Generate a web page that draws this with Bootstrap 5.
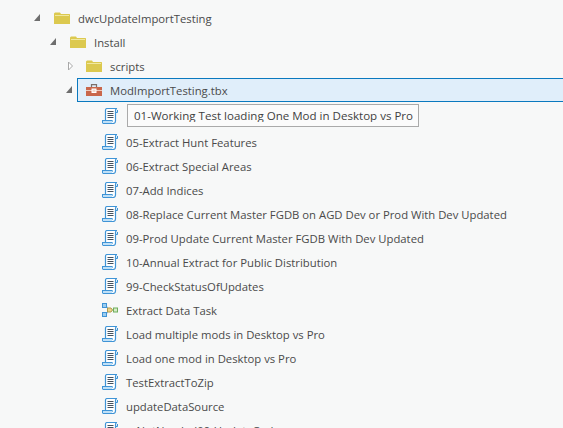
<!doctype html>
<html lang="en"><head><meta charset="utf-8">
<link href="https://cdn.jsdelivr.net/npm/bootstrap@5.3.0/dist/css/bootstrap.min.css" rel="stylesheet">
<style>
html,body{height:100%;overflow:hidden}
body{background:#f7f8f8;color:#4a4a4a;font-family:"Open Sans","Noto Sans",sans-serif;font-size:11.3px;width:563px;height:428px}
.tree{padding:6px 0 0;margin:0;list-style:none}
.trow{height:24px;line-height:24px;white-space:nowrap}
.trow>span:not(.tip),.selb>span{padding-top:2px}
.lv0{padding-left:34px}.lv1{padding-left:50px}.lv2{padding-left:66px}.lv3{padding-left:102px}
.tipr{height:28px}
.tw{width:8px;flex:none;margin-right:12px}
.ic{flex:none;display:block}
.lv0 .ic,.lv1 .ic,.lv2 .ic,.lv3 .ic{margin-right:8px}
.selb{flex:1;height:24px;background:#e0eefa;border:solid #0a79bf;border-width:1px 0 1px 1px;margin-left:-9px;padding-left:8px}
.tip{border:1px solid #aaa;background:#fbfbfb;height:23px;width:292px;padding:3px 0 0 6px;margin-left:1px;color:#3f3f3f;font-size:11.55px;margin-top:-1px}
.tipt{display:block;height:14px;line-height:15px;overflow:hidden}
</style></head><body>
<svg width="0" height="0" class="position-absolute"><defs>
<symbol id="fold" viewBox="0 0 16 12"><path d="M0 1.500 1 .500h5l1 1.500h8.500l.5.500V12H0z" fill="#dcc94f"/><path d="M1 3h14v1H1z" fill="#f0e8a0"/></symbol>
<symbol id="scr" viewBox="0 0 16 16"><path d="M3.500 12.500V2Q3.500.5 5.500.5H15Q13.500.7 13.500 2.500V13Q13.500 15.500 11 15.500H2Q.5 15.500.5 14V12.500H10V14" fill="#fff" stroke="#3f94d6" stroke-width="1.200"/><path d="M13.500 4.500h2V2" fill="#bfe0f7" stroke="#3f94d6"/><path d="M5.500 3.500h6M5.500 5.500h6M5.500 7.500h6M5.500 9.500h6" stroke="#45525e"/><path d="M1 13h9v2H1z" fill="#bfe0f7"/></symbol>
<symbol id="tbx" viewBox="0 0 16 12"><path d="M5.500 3V.6h5V3" fill="none" stroke="#7b6f6a" stroke-width="1.200"/><rect y="3" width="16" height="9" fill="#c9674b"/><path d="M0 6.500h16" stroke="#efc9bb"/><rect x="6" y="5" width="4" height="3.500" fill="#f3d9ce" stroke="#fff"/></symbol>
<symbol id="mdl" viewBox="0 0 16 14"><path d="M4 2.500 7 7M4 11.500 7 7" stroke="#6aa8d8" fill="none"/><rect x=".5" y=".5" width="4" height="4" fill="#9ccdf0" stroke="#3f94d6"/><rect x=".5" y="9.500" width="4" height="4" fill="#9ccdf0" stroke="#3f94d6"/><path d="M5.500 5h3.500l1.500 2-1.500 2H5.500z" fill="#ecd58c" stroke="#b29a4a"/><path d="M10.500 7H12" stroke="#6fae5c"/><rect x="11.500" y="5" width="4" height="4" fill="#d6ebc9" stroke="#6fae5c"/></symbol>
</defs></svg>
<ul class="tree">
<li class="trow lv0 d-flex align-items-center"><svg class="tw" height="8" viewBox="0 0 8 8"><path d="M0 7h6V0z" fill="#6e6e6e"/></svg><svg class="ic" width="16" height="12"><use href="#fold"/></svg><span>dwcUpdateImportTesting</span></li>
<li class="trow lv1 d-flex align-items-center"><svg class="tw" height="8" viewBox="0 0 8 8"><path d="M0 7h6V0z" fill="#6e6e6e"/></svg><svg class="ic" width="16" height="12"><use href="#fold"/></svg><span>Install</span></li>
<li class="trow lv2 d-flex align-items-center"><svg class="tw" height="10" viewBox="0 0 8 10"><path d="M2.500 1v8l4-4z" fill="#fff" stroke="#a8a8a8"/></svg><svg class="ic" width="16" height="12"><use href="#fold"/></svg><span>scripts</span></li>
<li class="trow lv2 d-flex align-items-center"><svg class="tw" height="8" viewBox="0 0 8 8"><path d="M0 7h6V0z" fill="#6e6e6e"/></svg><div class="selb d-flex align-items-center"><svg class="ic" width="16" height="12"><use href="#tbx"/></svg><span>ModImportTesting.tbx</span></div></li>
<li class="trow tipr lv3 d-flex align-items-center"><svg class="ic" width="16" height="16"><use href="#scr"/></svg><span class="tip"><span class="tipt">01-Working Test loading One Mod in Desktop vs Pro</span></span></li>
<li class="trow lv3 d-flex align-items-center"><svg class="ic" width="16" height="16"><use href="#scr"/></svg><span>05-Extract Hunt Features</span></li>
<li class="trow lv3 d-flex align-items-center"><svg class="ic" width="16" height="16"><use href="#scr"/></svg><span>06-Extract Special Areas</span></li>
<li class="trow lv3 d-flex align-items-center"><svg class="ic" width="16" height="16"><use href="#scr"/></svg><span>07-Add Indices</span></li>
<li class="trow lv3 d-flex align-items-center"><svg class="ic" width="16" height="16"><use href="#scr"/></svg><span>08-Replace Current Master FGDB on AGD Dev or Prod With Dev Updated</span></li>
<li class="trow lv3 d-flex align-items-center"><svg class="ic" width="16" height="16"><use href="#scr"/></svg><span>09-Prod Update Current Master FGDB With Dev Updated</span></li>
<li class="trow lv3 d-flex align-items-center"><svg class="ic" width="16" height="16"><use href="#scr"/></svg><span>10-Annual Extract for Public Distribution</span></li>
<li class="trow lv3 d-flex align-items-center"><svg class="ic" width="16" height="16"><use href="#scr"/></svg><span>99-CheckStatusOfUpdates</span></li>
<li class="trow lv3 d-flex align-items-center"><svg class="ic" width="16" height="14"><use href="#mdl"/></svg><span>Extract Data Task</span></li>
<li class="trow lv3 d-flex align-items-center"><svg class="ic" width="16" height="16"><use href="#scr"/></svg><span>Load multiple mods in Desktop vs Pro</span></li>
<li class="trow lv3 d-flex align-items-center"><svg class="ic" width="16" height="16"><use href="#scr"/></svg><span>Load one mod in Desktop vs Pro</span></li>
<li class="trow lv3 d-flex align-items-center"><svg class="ic" width="16" height="16"><use href="#scr"/></svg><span>TestExtractToZip</span></li>
<li class="trow lv3 d-flex align-items-center"><svg class="ic" width="16" height="16"><use href="#scr"/></svg><span>updateDataSource</span></li>
<li class="trow lv3 d-flex align-items-center"><svg class="ic" width="16" height="16"><use href="#scr"/></svg><span>zzNotNeeded09-UpdateCode</span></li>
</ul>
</body></html>
